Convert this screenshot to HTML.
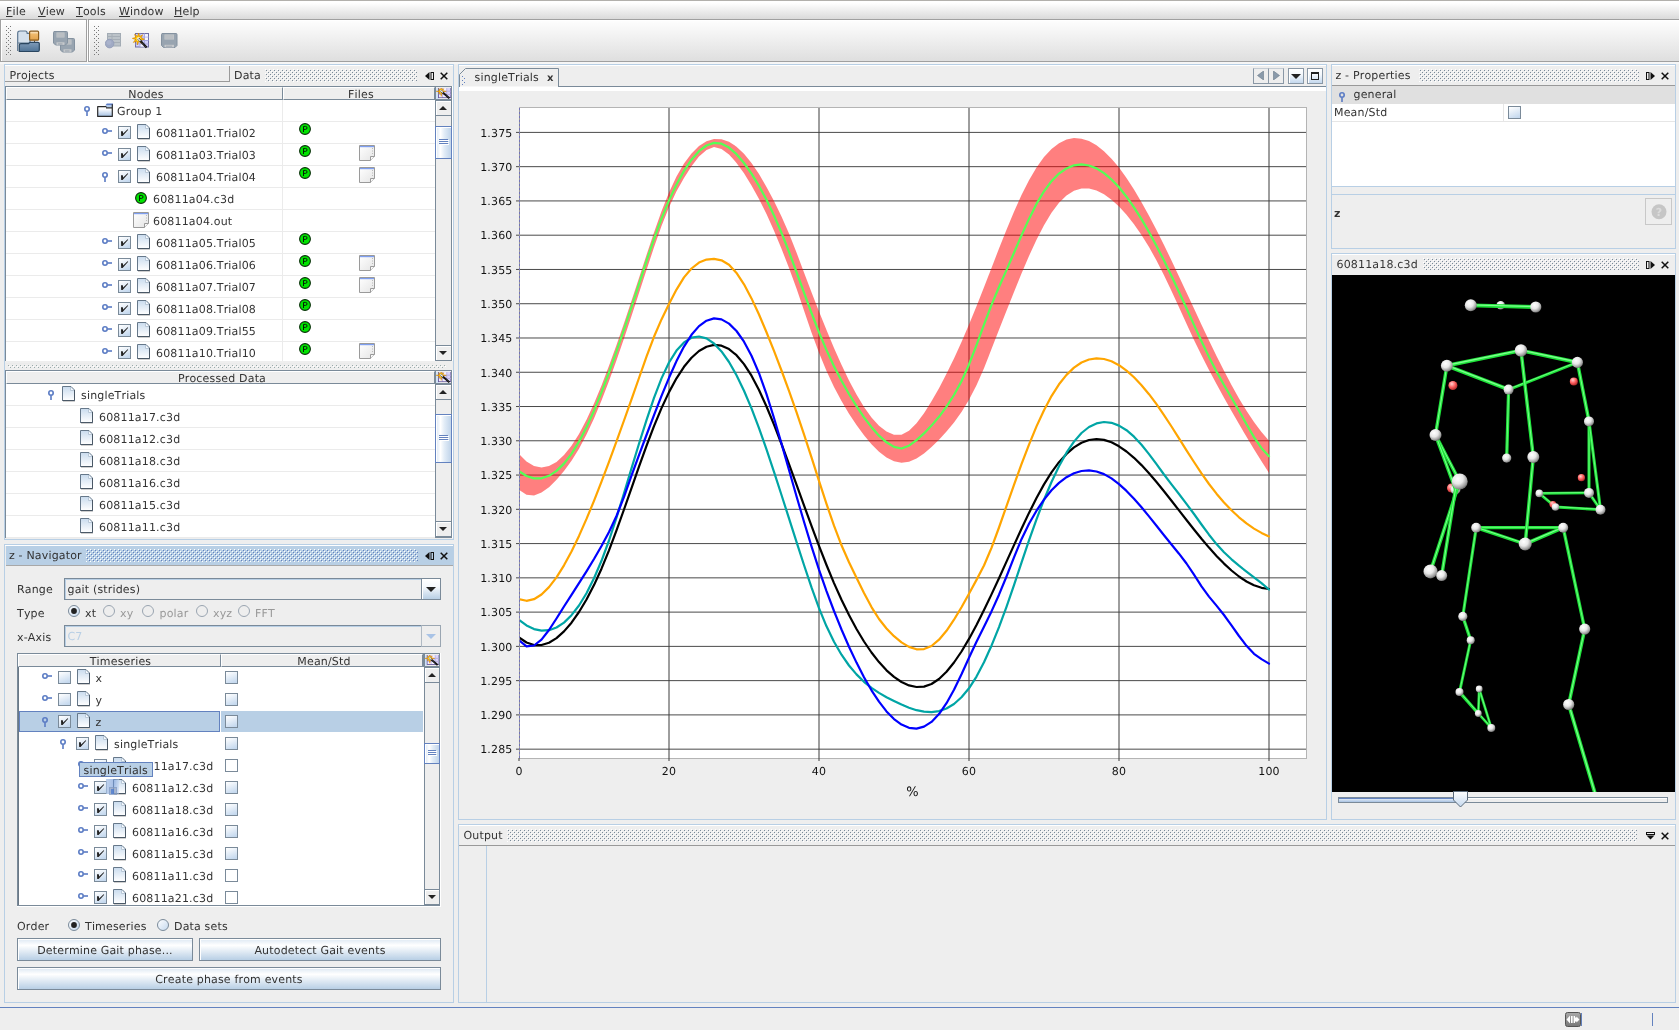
<!DOCTYPE html><html><head><meta charset="utf-8"><title>UI</title><style>
*{box-sizing:border-box}
html,body{margin:0;padding:0}
body{width:1679px;height:1030px;overflow:hidden;background:#eee;font:11px "DejaVu Sans","Liberation Sans",sans-serif;color:#333;position:relative;font-kerning:none;font-variant-ligatures:none;text-rendering:geometricPrecision;will-change:transform;letter-spacing:0.17px}
.a{position:absolute}
.t{position:absolute;white-space:nowrap;line-height:14px;height:14px}
.c{text-align:center}
.dis{color:#999}
.hdr{position:absolute;background:#eee;white-space:nowrap;border-bottom:1px solid #7a8a99;border-right:1px solid #7a8a99;border-top:1px solid #fff;border-left:1px solid #fff;text-align:center;line-height:13px}
.row{position:absolute;left:0;right:0;height:22px;border-bottom:1px solid #e9e9e9}
.btn{position:absolute;border:1px solid #7a8a99;background:linear-gradient(#dde8f3 0%,#fff 30%,#b8cfe5 100%);text-align:center;line-height:22px;padding-top:1px;box-shadow:inset 1px 1px 0 #fff}
</style></head><body>
<svg width="0" height="0" style="position:absolute"><defs>
<linearGradient id="gFile" x1="0" y1="0" x2="0" y2="1"><stop offset="0" stop-color="#c9dbee"/><stop offset="1" stop-color="#ffffff"/></linearGradient>
<linearGradient id="gCb" x1="0.2" y1="0" x2="0.6" y2="1"><stop offset="0" stop-color="#ffffff"/><stop offset="1" stop-color="#c4d8ee"/></linearGradient>
<linearGradient id="gFold" x1="0" y1="0" x2="0" y2="1"><stop offset="0" stop-color="#ffffff"/><stop offset=".25" stop-color="#ffffff"/><stop offset="1" stop-color="#a4c0e2"/></linearGradient>
<linearGradient id="gNote" x1="0" y1="0" x2="1" y2="1"><stop offset="0" stop-color="#ffffff"/><stop offset="1" stop-color="#e4e4e4"/></linearGradient>
<symbol id="hc" viewBox="0 0 10 6"><circle cx="3" cy="3" r="2.2" fill="none" stroke="#5b7cc4" stroke-width="1.6"/><rect x="5.6" y="2.2" width="4.4" height="1.6" fill="#5b7cc4"/></symbol>
<symbol id="he" viewBox="0 0 6 10"><circle cx="3" cy="3" r="2.2" fill="none" stroke="#5b7cc4" stroke-width="1.6"/><rect x="2.2" y="5.6" width="1.6" height="4.4" fill="#5b7cc4"/></symbol>
<symbol id="file" viewBox="0 0 13 16"><path d="M0.5 0.5H9L12.5 4V14.5H0.5Z" fill="url(#gFile)" stroke="#66788a" stroke-width="1"/><path d="M0.5 14.5H12.5V4" fill="none" stroke="#4a5866" stroke-width="1"/><path d="M8.5 1V4.5H12" fill="#f4f8fc" stroke="#b9c8d8" stroke-width="1"/><rect x="1" y="15" width="12" height="1" fill="#d0d0d0"/></symbol>
<symbol id="cb0" viewBox="0 0 13 13"><rect x="0.5" y="0.5" width="12" height="12" fill="url(#gCb)" stroke="#7a8a99"/></symbol>
<symbol id="cb1" viewBox="0 0 13 13"><rect x="0.5" y="0.5" width="12" height="12" fill="url(#gCb)" stroke="#7a8a99"/><path d="M3 5.2L4.8 5.2L5.2 7.6L9.6 3.2L10.2 3.8L4.6 10L3.2 10Z" fill="#222"/></symbol>
<symbol id="cbw" viewBox="0 0 13 13"><rect x="0.5" y="0.5" width="12" height="12" fill="#fff" stroke="#7a8a99"/></symbol>
<symbol id="pc" viewBox="0 0 12 12"><circle cx="6" cy="6" r="5.4" fill="#00e400" stroke="#0a300a" stroke-width="1.1"/><path d="M4.5 9V3.4H6.5A1.5 1.5 0 0 1 6.5 6.4H4.5" fill="none" stroke="#062006" stroke-width="1"/></symbol>
<symbol id="note" viewBox="0 0 16 16"><path d="M0.5 0.5H15.5V11.5L11.5 15.5H0.5Z" fill="url(#gNote)" stroke="#9a9a9a"/><rect x="1" y="1" width="14" height="1.2" fill="#7f9ff0"/><path d="M11.5 15.5V11.5H15.5" fill="#f8f8f8" stroke="#9a9a9a"/><path d="M13.5 3V10" stroke="#bbb" stroke-dasharray="1 1.5" fill="none"/></symbol>
<symbol id="folder" viewBox="0 0 16 14"><path d="M0.5 3.5H9.5V4.6H15.5V13.3H0.5Z" fill="url(#gFold)"/><polygon points="9.8,0.6 16,0.6 16,2.5 8.4,2.5" fill="#5b7cc4"/><rect x="9" y="2.5" width="6.5" height="1.8" fill="#b4cdee"/><path d="M0.6 3.7H9.4M9 4.8H15.4M0.7 3.2V13.4M15.3 1.2V13.4M0.2 13.3H15.8" stroke="#2a2a2a" stroke-width="1.2" fill="none"/></symbol>
<symbol id="wand" viewBox="0 0 16 12"><rect x="0" y="0" width="3" height="12" fill="#cfe2f8"/><rect x="2.5" y="-1" width="13.5" height="11.5" fill="#dad4fa" stroke="#6a5a9a" stroke-width="1"/><path d="M7 0V10M11.5 0V10M3 3.5H16M3 7H16" stroke="#b4acdc" stroke-width="1"/><rect x="7.6" y="0" width="3.4" height="3" fill="#f2efff"/><rect x="7.6" y="7.6" width="3.4" height="2.4" fill="#f2efff"/><rect x="3.2" y="7.6" width="3.2" height="2.4" fill="#f2efff"/><polygon points="5.50,-2.00 6.23,1.84 8.35,0.75 7.26,2.87 11.10,3.60 7.26,4.33 8.35,6.45 6.23,5.36 5.50,9.20 4.77,5.36 2.65,6.45 3.74,4.33 -0.10,3.60 3.74,2.87 2.65,0.75 4.77,1.84" fill="#f0a000" stroke="#d88800" stroke-width=".5"/><polygon points="5.50,0.60 5.96,2.49 7.03,2.07 6.61,3.14 8.50,3.60 6.61,4.06 7.03,5.13 5.96,4.71 5.50,6.60 5.04,4.71 3.97,5.13 4.39,4.06 2.50,3.60 4.39,3.14 3.97,2.07 5.04,2.49" fill="#ffe400"/><circle cx="5.5" cy="3.6" r="1.3" fill="#fff"/><path d="M5 3L14.4 11.2" stroke="#0a0a0a" stroke-width="2.1"/><path d="M5 2.9L7.4 5" stroke="#f4f4f4" stroke-width="1.5"/><path d="M8 5.6L14 10.8" stroke="#777" stroke-width=".7" stroke-dasharray=".8 1"/></symbol>
<symbol id="arrU" viewBox="0 0 8 4"><path d="M0 4L4 0L8 4Z" fill="#222"/></symbol>
<symbol id="arrD" viewBox="0 0 8 4"><path d="M0 0L4 4L8 0Z" fill="#222"/></symbol>
<symbol id="xx" viewBox="0 0 8 8"><path d="M0.7 0.7L7.3 7.3M7.3 0.7L0.7 7.3" stroke="#111" stroke-width="1.5"/></symbol>
<symbol id="pinL" viewBox="0 0 9 8"><path d="M0 4L4.5 0V8Z" fill="#111"/><rect x="6" y="0.5" width="2.5" height="7" fill="none" stroke="#111" stroke-width="1"/></symbol>
<symbol id="pinR" viewBox="0 0 9 8"><path d="M9 4L4.5 0V8Z" fill="#111"/><rect x="0.5" y="0.5" width="2.5" height="7" fill="none" stroke="#111" stroke-width="1"/></symbol>
</defs></svg>
<svg width="0" height="0" style="position:absolute"><defs>
<pattern id="bumpI" width="4" height="4" patternUnits="userSpaceOnUse"><rect x="0" y="0" width="1" height="1" fill="#fff"/><rect x="1" y="1" width="1" height="1" fill="#7a8a99"/><rect x="2" y="2" width="1" height="1" fill="#fff"/><rect x="3" y="3" width="1" height="1" fill="#7a8a99"/></pattern>
<pattern id="bumpA" width="4" height="4" patternUnits="userSpaceOnUse"><rect x="0" y="0" width="1" height="1" fill="#fff"/><rect x="1" y="1" width="1" height="1" fill="#6382bf"/><rect x="2" y="2" width="1" height="1" fill="#fff"/><rect x="3" y="3" width="1" height="1" fill="#6382bf"/></pattern>
<pattern id="tbgrip" width="4" height="4" patternUnits="userSpaceOnUse"><rect x="0" y="0" width="1" height="1" fill="#777"/><rect x="2" y="2" width="1" height="1" fill="#777"/></pattern>
<pattern id="split" width="4" height="4" patternUnits="userSpaceOnUse"><rect x="0" y="0" width="1" height="1" fill="#9aa"/><rect x="2" y="2" width="1" height="1" fill="#9aa"/><rect x="1" y="1" width="1" height="1" fill="#fff"/><rect x="3" y="3" width="1" height="1" fill="#fff"/></pattern>
</defs></svg>
<div class="a" style="left:0px;top:0px;width:1679px;height:20px;background:linear-gradient(#fff 0,#fff 10%,#dadada 100%);border-top:1px solid #b2b0ac;border-bottom:1px solid #c8c8c8"></div>
<div class="t " style="left:6px;top:5px;"><u>F</u>ile</div>
<div class="t " style="left:38px;top:5px;"><u>V</u>iew</div>
<div class="t " style="left:76px;top:5px;"><u>T</u>ools</div>
<div class="t " style="left:119px;top:5px;"><u>W</u>indow</div>
<div class="t " style="left:174px;top:5px;"><u>H</u>elp</div>
<div class="a" style="left:0px;top:20px;width:1679px;height:42px;background:linear-gradient(#fefefe,#dedede)"></div>
<div class="a" style="left:0px;top:19px;width:87px;height:43px;border:1px solid #a0a0a0;box-shadow:inset 1px 1px 0 #fff;"></div>
<div class="a" style="left:88px;top:19px;width:1600px;height:43px;border:1px solid #a0a0a0;box-shadow:inset 1px 1px 0 #fff;"></div>
<div class="a" style="left:87px;top:20px;width:1px;height:42px;background:#fff"></div>
<div class="a" style="left:0px;top:62px;width:1679px;height:2px;background:#f6f6f6"></div>
<svg class="a" style="left:6px;top:26px" width="6" height="30"><rect width="6" height="30" fill="url(#tbgrip)"/></svg>
<svg class="a" style="left:94px;top:26px" width="6" height="30"><rect width="6" height="30" fill="url(#tbgrip)"/></svg>
<svg class="a" style="left:17px;top:30px" width="23" height="23" viewBox="0 0 23 23">
<defs><linearGradient id="fo1" x1="0" y1="0" x2="0" y2="1"><stop offset="0" stop-color="#7f9bb8"/><stop offset="1" stop-color="#4f7396"/></linearGradient>
<linearGradient id="fo2" x1="0" y1="0" x2="0" y2="1"><stop offset="0" stop-color="#fff3dc"/><stop offset=".35" stop-color="#efb86a"/><stop offset="1" stop-color="#e2a24c"/></linearGradient></defs>
<path d="M0.7 21V3.2Q0.7 1 3 1H8.5Q10 1 10.2 3.3H13V13H0.7" fill="#d4e0ec" stroke="#5c7690" stroke-width="1.2"/>
<rect x="12.6" y="1.2" width="9" height="9" rx="1" fill="url(#fo2)" stroke="#8a5a1a" stroke-width="1.2"/>
<path d="M17.5 10.6V13" stroke="#6a5030" stroke-width="1"/>
<path d="M2.3 21.5V15Q2.3 13.6 4 13.6H11.5L13 12.4H21Q22.3 12.4 22.3 13.6V20Q22.3 21.5 21 21.5Z" fill="url(#fo1)" stroke="#2a4660" stroke-width="1.2"/>
</svg>
<svg class="a" style="left:53px;top:31px" width="23" height="22" viewBox="0 0 23 22"><g transform="translate(7,7)"><path d="M1 0.5H13.5Q14.5 0.5 14.5 1.5V12L12.5 14H2.5L0.5 12V1.5Q0.5 0.5 1.5 0.5Z" fill="#98a4b0" stroke="#8492a0" stroke-width="1"/><rect x="3.5" y="1.5" width="8" height="5" fill="#c6c9cc"/><path d="M4 3H11M4 5H11" stroke="#aeb4ba" stroke-width="1"/><rect x="3.5" y="11.3" width="8" height="2.6" fill="#c6c9cc"/><rect x="5" y="12.1" width="4.5" height="1.8" fill="#aab2ba"/></g><g transform="translate(0,0)"><path d="M1 0.5H13.5Q14.5 0.5 14.5 1.5V12L12.5 14H2.5L0.5 12V1.5Q0.5 0.5 1.5 0.5Z" fill="#98a4b0" stroke="#8492a0" stroke-width="1"/><rect x="3.5" y="1.5" width="8" height="5" fill="#c6c9cc"/><path d="M4 3H11M4 5H11" stroke="#aeb4ba" stroke-width="1"/><rect x="3.5" y="11.3" width="8" height="2.6" fill="#c6c9cc"/><rect x="5" y="12.1" width="4.5" height="1.8" fill="#aab2ba"/></g></svg>
<svg class="a" style="left:105px;top:32px" width="17" height="17" viewBox="0 0 17 17">
<rect x="2.5" y="1.5" width="13" height="12.5" fill="#bcc3c9" stroke="#a2abb4"/>
<path d="M2.5 4.5H15.5M2.5 7.5H15.5M2.5 10.5H15.5M7 1.5V14" stroke="#a6aeb6" stroke-width="1"/>
<circle cx="4.6" cy="11.6" r="4.3" fill="#a0aac4" stroke="#929cb8" stroke-width=".8"/><circle cx="4" cy="10.6" r="2.4" fill="#aab3cc"/></svg>
<svg class="a" style="left:132px;top:32px" width="18" height="17" viewBox="0 0 18 17">
<rect x="3.5" y="1.5" width="13" height="13.5" fill="#d2d2fa" stroke="#6e6ea4"/>
<path d="M3.5 5H16.5M3.5 8.5H16.5M3.5 12H16.5M8 1.5V15M12.5 1.5V15" stroke="#a8a8e0" stroke-width="1"/>
<rect x="13" y="2.2" width="3" height="2.4" fill="#f4f4ff"/><rect x="13" y="5.6" width="3" height="2.4" fill="#f4f4ff"/><rect x="8.6" y="12.6" width="3.4" height="2" fill="#f4f4ff"/>
<path d="M6.6 1L7.6 4.6L10.6 2.8L9 5.8L12.4 7.2L8.8 8.2L9.4 11.4L6.8 9.2L5.4 12.8L4.8 9L1.4 10.4L3.6 7.4L0.4 6.4L3.8 5.4L2.6 2.4L5.6 4.4Z" fill="#ffc400" stroke="#d88a00" stroke-width=".7"/>
<circle cx="6.6" cy="7" r="2" fill="#fff4b0"/>
<path d="M6.2 6.6L14.6 15.6" stroke="#111" stroke-width="2.2"/><path d="M6 6.4L8.4 9" stroke="#eee" stroke-width="1.4"/><path d="M9 9.6L14 15" stroke="#888" stroke-width=".6" stroke-dasharray="1 1"/></svg>
<svg class="a" style="left:161px;top:33px" width="17" height="16" viewBox="0 0 17 16"><g transform="translate(0,0)"><path d="M1 0.5H15Q16 0.5 16 1.5V12.5L14 14.5H2.5L0.5 12.5V1.5Q0.5 0.5 1.5 0.5Z" fill="#98a4b0" stroke="#8492a0" stroke-width="1"/><rect x="3.5" y="1.5" width="9.5" height="5" fill="#c6c9cc"/><path d="M4 3H12.5M4 5H12.5" stroke="#aeb4ba" stroke-width="1"/><rect x="3.5" y="11.8" width="9.5" height="2.6" fill="#c6c9cc"/><rect x="5" y="12.6" width="6" height="1.8" fill="#aab2ba"/></g></svg>
<div class="a" style="left:4px;top:64px;width:450px;height:476px;border:1px solid #b8cfe5;box-shadow:inset 0 1px 0 #fff"></div>
<div class="a" style="left:5px;top:66px;width:225px;height:16px;border-bottom:1px solid #9a9a9a;border-right:1px solid #9a9a9a"></div>
<div class="t " style="left:9.5px;top:69px;">Projects</div>
<div class="t " style="left:234px;top:69px;">Data</div>
<svg class="a" style="left:265px;top:69px" width="152" height="13"><rect width="152" height="13" fill="url(#bumpI)"/></svg>
<svg class="a" style="left:425px;top:72px" width="9" height="8" ><use href="#pinL" width="9" height="8"/></svg><svg class="a" style="left:440px;top:72px" width="8" height="8" ><use href="#xx" width="8" height="8"/></svg>
<div class="a" style="left:5px;top:86px;width:447px;height:275px;background:#fff;border:1px solid #7a8a99;border-bottom:none"></div><div class="a" style="left:452px;top:86px;width:1px;height:275px;background:#fff"></div>
<div class="hdr" style="left:6px;top:87px;width:277px;height:13px;padding-left:3px">Nodes</div>
<div class="hdr" style="left:283px;top:87px;width:152px;height:13px;padding-left:4px">Files</div>
<div class="a" style="left:435px;top:87px;width:16px;height:13px;background:#eee;border-left:1px solid #7a8a99;border-bottom:1px solid #7a8a99"></div>
<svg class="a" style="left:436px;top:88px" width="15" height="11" ><use href="#wand" width="15" height="11"/></svg>
<div class="a" style="left:6px;top:121px;width:429px;height:1px;background:#ebebeb"></div>
<svg class="a" style="left:84px;top:106px" width="6" height="10" ><use href="#he" width="6" height="10"/></svg>
<svg class="a" style="left:97px;top:102.5px" width="16" height="14" ><use href="#folder" width="16" height="14"/></svg>
<div class="t " style="left:117px;top:105px;">Group 1</div>
<div class="a" style="left:6px;top:143px;width:429px;height:1px;background:#ebebeb"></div>
<svg class="a" style="left:102px;top:128px" width="10" height="6" ><use href="#hc" width="10" height="6"/></svg>
<svg class="a" style="left:118px;top:126px" width="13" height="13" ><use href="#cb1" width="13" height="13"/></svg>
<svg class="a" style="left:137px;top:124px" width="13" height="16" ><use href="#file" width="13" height="16"/></svg>
<div class="t " style="left:156px;top:127px;">60811a01.Trial02</div>
<svg class="a" style="left:299px;top:123px" width="12" height="12" ><use href="#pc" width="12" height="12"/></svg>
<div class="a" style="left:6px;top:165px;width:429px;height:1px;background:#ebebeb"></div>
<svg class="a" style="left:102px;top:150px" width="10" height="6" ><use href="#hc" width="10" height="6"/></svg>
<svg class="a" style="left:118px;top:148px" width="13" height="13" ><use href="#cb1" width="13" height="13"/></svg>
<svg class="a" style="left:137px;top:146px" width="13" height="16" ><use href="#file" width="13" height="16"/></svg>
<div class="t " style="left:156px;top:149px;">60811a03.Trial03</div>
<svg class="a" style="left:299px;top:145px" width="12" height="12" ><use href="#pc" width="12" height="12"/></svg>
<svg class="a" style="left:359px;top:145px" width="16" height="16" ><use href="#note" width="16" height="16"/></svg>
<div class="a" style="left:6px;top:187px;width:429px;height:1px;background:#ebebeb"></div>
<svg class="a" style="left:102px;top:172px" width="6" height="10" ><use href="#he" width="6" height="10"/></svg>
<svg class="a" style="left:118px;top:170px" width="13" height="13" ><use href="#cb1" width="13" height="13"/></svg>
<svg class="a" style="left:137px;top:168px" width="13" height="16" ><use href="#file" width="13" height="16"/></svg>
<div class="t " style="left:156px;top:171px;">60811a04.Trial04</div>
<svg class="a" style="left:299px;top:167px" width="12" height="12" ><use href="#pc" width="12" height="12"/></svg>
<svg class="a" style="left:359px;top:167px" width="16" height="16" ><use href="#note" width="16" height="16"/></svg>
<div class="a" style="left:6px;top:209px;width:429px;height:1px;background:#ebebeb"></div>
<svg class="a" style="left:135px;top:192px" width="12" height="12" ><use href="#pc" width="12" height="12"/></svg>
<div class="t " style="left:153px;top:193px;">60811a04.c3d</div>
<div class="a" style="left:6px;top:231px;width:429px;height:1px;background:#ebebeb"></div>
<svg class="a" style="left:133px;top:212px" width="16" height="16" ><use href="#note" width="16" height="16"/></svg>
<div class="t " style="left:153px;top:215px;">60811a04.out</div>
<div class="a" style="left:6px;top:253px;width:429px;height:1px;background:#ebebeb"></div>
<svg class="a" style="left:102px;top:238px" width="10" height="6" ><use href="#hc" width="10" height="6"/></svg>
<svg class="a" style="left:118px;top:236px" width="13" height="13" ><use href="#cb1" width="13" height="13"/></svg>
<svg class="a" style="left:137px;top:234px" width="13" height="16" ><use href="#file" width="13" height="16"/></svg>
<div class="t " style="left:156px;top:237px;">60811a05.Trial05</div>
<svg class="a" style="left:299px;top:233px" width="12" height="12" ><use href="#pc" width="12" height="12"/></svg>
<div class="a" style="left:6px;top:275px;width:429px;height:1px;background:#ebebeb"></div>
<svg class="a" style="left:102px;top:260px" width="10" height="6" ><use href="#hc" width="10" height="6"/></svg>
<svg class="a" style="left:118px;top:258px" width="13" height="13" ><use href="#cb1" width="13" height="13"/></svg>
<svg class="a" style="left:137px;top:256px" width="13" height="16" ><use href="#file" width="13" height="16"/></svg>
<div class="t " style="left:156px;top:259px;">60811a06.Trial06</div>
<svg class="a" style="left:299px;top:255px" width="12" height="12" ><use href="#pc" width="12" height="12"/></svg>
<svg class="a" style="left:359px;top:255px" width="16" height="16" ><use href="#note" width="16" height="16"/></svg>
<div class="a" style="left:6px;top:297px;width:429px;height:1px;background:#ebebeb"></div>
<svg class="a" style="left:102px;top:282px" width="10" height="6" ><use href="#hc" width="10" height="6"/></svg>
<svg class="a" style="left:118px;top:280px" width="13" height="13" ><use href="#cb1" width="13" height="13"/></svg>
<svg class="a" style="left:137px;top:278px" width="13" height="16" ><use href="#file" width="13" height="16"/></svg>
<div class="t " style="left:156px;top:281px;">60811a07.Trial07</div>
<svg class="a" style="left:299px;top:277px" width="12" height="12" ><use href="#pc" width="12" height="12"/></svg>
<svg class="a" style="left:359px;top:277px" width="16" height="16" ><use href="#note" width="16" height="16"/></svg>
<div class="a" style="left:6px;top:319px;width:429px;height:1px;background:#ebebeb"></div>
<svg class="a" style="left:102px;top:304px" width="10" height="6" ><use href="#hc" width="10" height="6"/></svg>
<svg class="a" style="left:118px;top:302px" width="13" height="13" ><use href="#cb1" width="13" height="13"/></svg>
<svg class="a" style="left:137px;top:300px" width="13" height="16" ><use href="#file" width="13" height="16"/></svg>
<div class="t " style="left:156px;top:303px;">60811a08.Trial08</div>
<svg class="a" style="left:299px;top:299px" width="12" height="12" ><use href="#pc" width="12" height="12"/></svg>
<div class="a" style="left:6px;top:341px;width:429px;height:1px;background:#ebebeb"></div>
<svg class="a" style="left:102px;top:326px" width="10" height="6" ><use href="#hc" width="10" height="6"/></svg>
<svg class="a" style="left:118px;top:324px" width="13" height="13" ><use href="#cb1" width="13" height="13"/></svg>
<svg class="a" style="left:137px;top:322px" width="13" height="16" ><use href="#file" width="13" height="16"/></svg>
<div class="t " style="left:156px;top:325px;">60811a09.Trial55</div>
<svg class="a" style="left:299px;top:321px" width="12" height="12" ><use href="#pc" width="12" height="12"/></svg>
<div class="a" style="left:6px;top:363px;width:429px;height:1px;background:#ebebeb"></div>
<svg class="a" style="left:102px;top:348px" width="10" height="6" ><use href="#hc" width="10" height="6"/></svg>
<svg class="a" style="left:118px;top:346px" width="13" height="13" ><use href="#cb1" width="13" height="13"/></svg>
<svg class="a" style="left:137px;top:344px" width="13" height="16" ><use href="#file" width="13" height="16"/></svg>
<div class="t " style="left:156px;top:347px;">60811a10.Trial10</div>
<svg class="a" style="left:299px;top:343px" width="12" height="12" ><use href="#pc" width="12" height="12"/></svg>
<svg class="a" style="left:359px;top:343px" width="16" height="16" ><use href="#note" width="16" height="16"/></svg>
<div class="a" style="left:282px;top:100px;width:1px;height:261px;background:#ebebeb"></div>
<div class="a" style="left:435px;top:100px;width:17px;height:261px;background:#eee;border-left:1px solid #7a8a99;border-right:1px solid #7a8a99"></div><div class="a" style="left:435px;top:100px;width:17px;height:16px;background:#eee;border:1px solid #7a8a99;border-top-color:#7a8a99;box-shadow:inset 1px 1px 0 #fff"></div><svg class="a" style="left:439px;top:105.5px" width="8" height="4" ><use href="#arrU" width="8" height="4"/></svg><div class="a" style="left:435px;top:345px;width:17px;height:16px;background:#eee;border:1px solid #7a8a99;box-shadow:inset 1px 1px 0 #fff"></div><svg class="a" style="left:439px;top:351px" width="8" height="4" ><use href="#arrD" width="8" height="4"/></svg><div class="a" style="left:435px;top:126px;width:17px;height:33px;border:1px solid #6382bf;background:linear-gradient(90deg,#dbe7f4 0,#fff 30%,#e3edf7 55%,#c0d4ea 100%);box-shadow:inset 1px 1px 0 #fff"></div><div class="a" style="left:439px;top:139px;width:9px;height:1px;background:#6382bf"></div><div class="a" style="left:440px;top:140px;width:9px;height:1px;background:#fff"></div><div class="a" style="left:439px;top:141px;width:9px;height:1px;background:#6382bf"></div><div class="a" style="left:440px;top:142px;width:9px;height:1px;background:#fff"></div><div class="a" style="left:439px;top:143px;width:9px;height:1px;background:#6382bf"></div><div class="a" style="left:440px;top:144px;width:9px;height:1px;background:#fff"></div>
<svg class="a" style="left:8px;top:365px" width="438" height="3"><rect width="438" height="3" fill="url(#split)"/></svg>
<div class="a" style="left:5px;top:370px;width:447px;height:168px;background:#fff;border:1px solid #7a8a99"></div><div class="a" style="left:452px;top:370px;width:1px;height:168px;background:#fff"></div>
<div class="hdr" style="left:6px;top:371px;width:429px;height:13px;padding-left:3px">Processed Data</div>
<div class="a" style="left:435px;top:371px;width:16px;height:13px;background:#eee;border-left:1px solid #7a8a99;border-bottom:1px solid #7a8a99"></div>
<svg class="a" style="left:436px;top:372px" width="15" height="11" ><use href="#wand" width="15" height="11"/></svg>
<div class="a" style="left:6px;top:405px;width:429px;height:1px;background:#ebebeb"></div>
<svg class="a" style="left:48px;top:390px" width="6" height="10" ><use href="#he" width="6" height="10"/></svg>
<svg class="a" style="left:62px;top:386px" width="13" height="16" ><use href="#file" width="13" height="16"/></svg>
<div class="t " style="left:81px;top:389px;">singleTrials</div>
<div class="a" style="left:6px;top:427px;width:429px;height:1px;background:#ebebeb"></div>
<svg class="a" style="left:80px;top:408px" width="13" height="16" ><use href="#file" width="13" height="16"/></svg>
<div class="t " style="left:99px;top:411px;">60811a17.c3d</div>
<div class="a" style="left:6px;top:449px;width:429px;height:1px;background:#ebebeb"></div>
<svg class="a" style="left:80px;top:430px" width="13" height="16" ><use href="#file" width="13" height="16"/></svg>
<div class="t " style="left:99px;top:433px;">60811a12.c3d</div>
<div class="a" style="left:6px;top:471px;width:429px;height:1px;background:#ebebeb"></div>
<svg class="a" style="left:80px;top:452px" width="13" height="16" ><use href="#file" width="13" height="16"/></svg>
<div class="t " style="left:99px;top:455px;">60811a18.c3d</div>
<div class="a" style="left:6px;top:493px;width:429px;height:1px;background:#ebebeb"></div>
<svg class="a" style="left:80px;top:474px" width="13" height="16" ><use href="#file" width="13" height="16"/></svg>
<div class="t " style="left:99px;top:477px;">60811a16.c3d</div>
<div class="a" style="left:6px;top:515px;width:429px;height:1px;background:#ebebeb"></div>
<svg class="a" style="left:80px;top:496px" width="13" height="16" ><use href="#file" width="13" height="16"/></svg>
<div class="t " style="left:99px;top:499px;">60811a15.c3d</div>
<div class="a" style="left:6px;top:537px;width:429px;height:1px;background:#ebebeb"></div>
<svg class="a" style="left:80px;top:518px" width="13" height="16" ><use href="#file" width="13" height="16"/></svg>
<div class="t " style="left:99px;top:521px;">60811a11.c3d</div>
<div class="a" style="left:435px;top:384px;width:17px;height:153px;background:#eee;border-left:1px solid #7a8a99;border-right:1px solid #7a8a99"></div><div class="a" style="left:435px;top:384px;width:17px;height:16px;background:#eee;border:1px solid #7a8a99;border-top-color:#7a8a99;box-shadow:inset 1px 1px 0 #fff"></div><svg class="a" style="left:439px;top:389.5px" width="8" height="4" ><use href="#arrU" width="8" height="4"/></svg><div class="a" style="left:435px;top:521px;width:17px;height:16px;background:#eee;border:1px solid #7a8a99;box-shadow:inset 1px 1px 0 #fff"></div><svg class="a" style="left:439px;top:527px" width="8" height="4" ><use href="#arrD" width="8" height="4"/></svg><div class="a" style="left:435px;top:414px;width:17px;height:49px;border:1px solid #6382bf;background:linear-gradient(90deg,#dbe7f4 0,#fff 30%,#e3edf7 55%,#c0d4ea 100%);box-shadow:inset 1px 1px 0 #fff"></div><div class="a" style="left:439px;top:435px;width:9px;height:1px;background:#6382bf"></div><div class="a" style="left:440px;top:436px;width:9px;height:1px;background:#fff"></div><div class="a" style="left:439px;top:437px;width:9px;height:1px;background:#6382bf"></div><div class="a" style="left:440px;top:438px;width:9px;height:1px;background:#fff"></div><div class="a" style="left:439px;top:439px;width:9px;height:1px;background:#6382bf"></div><div class="a" style="left:440px;top:440px;width:9px;height:1px;background:#fff"></div>
<svg width="0" height="0" style="position:absolute"><defs><linearGradient id="gRad" x1="0" y1="0" x2="1" y2="1"><stop offset="0" stop-color="#fff"/><stop offset="1" stop-color="#c4d8ee"/></linearGradient></defs></svg>
<div class="a" style="left:4px;top:544px;width:450px;height:459px;border:1px solid #b8cfe5"></div>
<div class="a" style="left:5px;top:545px;width:448px;height:1px;background:#fff"></div>
<div class="a" style="left:6px;top:546px;width:447px;height:20px;background:#b8cfe5;border-bottom:1px solid #a8a8a8"></div>
<div class="t " style="left:9px;top:549px;">z - Navigator</div>
<svg class="a" style="left:86px;top:549px" width="332" height="13"><rect width="332" height="13" fill="url(#bumpA)"/></svg>
<svg class="a" style="left:425px;top:552px" width="9" height="8" ><use href="#pinL" width="9" height="8"/></svg><svg class="a" style="left:440px;top:552px" width="8" height="8" ><use href="#xx" width="8" height="8"/></svg>
<div class="t " style="left:17px;top:583px;">Range</div>
<div class="a" style="left:64px;top:578px;width:377px;height:22px;border:1px solid #7a8a99;background:#eee;box-shadow:inset 1px 1px 0 #b8cfe5"></div><div class="a" style="left:421px;top:578px;width:20px;height:22px;border:1px solid #7a8a99;background:linear-gradient(#fff 0,#f4f8fc 40%,#b8cfe5 100%);box-shadow:inset 1px 1px 0 #fff"></div><svg class="a" style="left:426px;top:587px" width="10" height="5"><path d="M0 0H10L5 5Z" fill="#222"/></svg><div class="t " style="left:67.5px;top:583px;">gait (strides)</div>
<div class="t " style="left:17px;top:607px;">Type</div>
<svg class="a" style="left:68px;top:605px" width="13" height="13"><circle cx="6" cy="6" r="5.5" fill="url(#gRad)" stroke="#7a8a99" stroke-width="1"/><circle cx="6" cy="6" r="2.9" fill="#222"/></svg>
<div class="t " style="left:85px;top:607px;">xt</div>
<svg class="a" style="left:103px;top:605px" width="13" height="13"><circle cx="6" cy="6" r="5.5" fill="#eee" stroke="#99a4b0" stroke-width="1"/></svg>
<div class="t dis" style="left:120px;top:607px;">xy</div>
<svg class="a" style="left:142px;top:605px" width="13" height="13"><circle cx="6" cy="6" r="5.5" fill="#eee" stroke="#99a4b0" stroke-width="1"/></svg>
<div class="t dis" style="left:159.5px;top:607px;">polar</div>
<svg class="a" style="left:196px;top:605px" width="13" height="13"><circle cx="6" cy="6" r="5.5" fill="#eee" stroke="#99a4b0" stroke-width="1"/></svg>
<div class="t dis" style="left:213px;top:607px;">xyz</div>
<svg class="a" style="left:238px;top:605px" width="13" height="13"><circle cx="6" cy="6" r="5.5" fill="#eee" stroke="#99a4b0" stroke-width="1"/></svg>
<div class="t dis" style="left:255px;top:607px;">FFT</div>
<div class="t " style="left:17px;top:631px;">x-Axis</div>
<div class="a" style="left:64px;top:625px;width:377px;height:22px;border:1px solid #7a8a99;background:#eee;box-shadow:inset 1px 1px 0 #b8cfe5"></div><div class="a" style="left:421px;top:625px;width:20px;height:22px;border:1px solid #9aa6b2;border-left:1px solid #b0bac4;background:#eee"></div><svg class="a" style="left:426px;top:634px" width="10" height="5"><path d="M0 0H10L5 5Z" fill="#a9c3e6"/></svg><div class="t " style="left:67.5px;top:630px;color:#b8cfe5">C7</div>
<div class="a" style="left:17px;top:653px;width:423px;height:253px;background:#fff;border:1px solid #7a8a99"></div>
<div class="a" style="left:440px;top:653px;width:1px;height:254px;background:#fff"></div>
<div class="a" style="left:17px;top:906px;width:424px;height:1px;background:#fff"></div>
<div class="a" style="left:18px;top:667px;width:1px;height:238px;background:#6a7886"></div>
<div class="hdr" style="left:18px;top:654px;width:203px;height:13px;padding-left:2px">Timeseries</div>
<div class="hdr" style="left:221px;top:654px;width:202px;height:13px;padding-left:4px">Mean/Std</div>
<div class="a" style="left:423px;top:654px;width:16px;height:13px;background:#eee;border-left:2px solid #7a8a99;border-bottom:1px solid #7a8a99"></div>
<svg class="a" style="left:425px;top:655px" width="14" height="11" ><use href="#wand" width="14" height="11"/></svg>
<div class="a" style="left:19px;top:667px;width:404px;height:238px;overflow:hidden">
<svg class="a" style="left:23px;top:6px" width="10" height="6" ><use href="#hc" width="10" height="6"/></svg>
<svg class="a" style="left:39px;top:4px" width="13" height="13" ><use href="#cb0" width="13" height="13"/></svg>
<svg class="a" style="left:58px;top:2px" width="13" height="16" ><use href="#file" width="13" height="16"/></svg>
<div class="t " style="left:76.5px;top:5px;">x</div>
<svg class="a" style="left:206px;top:4px" width="13" height="13" ><use href="#cb0" width="13" height="13"/></svg>
<svg class="a" style="left:23px;top:28px" width="10" height="6" ><use href="#hc" width="10" height="6"/></svg>
<svg class="a" style="left:39px;top:26px" width="13" height="13" ><use href="#cb0" width="13" height="13"/></svg>
<svg class="a" style="left:58px;top:24px" width="13" height="16" ><use href="#file" width="13" height="16"/></svg>
<div class="t " style="left:76.5px;top:27px;">y</div>
<svg class="a" style="left:206px;top:26px" width="13" height="13" ><use href="#cb0" width="13" height="13"/></svg>
<div class="a" style="left:0px;top:44px;width:201px;height:21px;background:#b8cfe5;border:1px solid #6382bf"></div>
<div class="a" style="left:202px;top:44px;width:203px;height:21px;background:#b8cfe5"></div>
<svg class="a" style="left:23px;top:50px" width="6" height="10" ><use href="#he" width="6" height="10"/></svg>
<svg class="a" style="left:39px;top:48px" width="13" height="13" ><use href="#cb1" width="13" height="13"/></svg>
<svg class="a" style="left:58px;top:46px" width="13" height="16" ><use href="#file" width="13" height="16"/></svg>
<div class="t " style="left:76.5px;top:49px;">z</div>
<svg class="a" style="left:206px;top:48px" width="13" height="13" ><use href="#cb0" width="13" height="13"/></svg>
<svg class="a" style="left:41px;top:72px" width="6" height="10" ><use href="#he" width="6" height="10"/></svg>
<svg class="a" style="left:57px;top:70px" width="13" height="13" ><use href="#cb1" width="13" height="13"/></svg>
<svg class="a" style="left:76px;top:68px" width="13" height="16" ><use href="#file" width="13" height="16"/></svg>
<div class="t " style="left:95px;top:71px;">singleTrials</div>
<svg class="a" style="left:206px;top:70px" width="13" height="13" ><use href="#cb0" width="13" height="13"/></svg>
<svg class="a" style="left:59px;top:94px" width="10" height="6" ><use href="#hc" width="10" height="6"/></svg>
<svg class="a" style="left:75px;top:92px" width="13" height="13" ><use href="#cb0" width="13" height="13"/></svg>
<svg class="a" style="left:94px;top:90px" width="13" height="16" ><use href="#file" width="13" height="16"/></svg>
<div class="t " style="left:113px;top:93px;">60811a17.c3d</div>
<svg class="a" style="left:206px;top:92px" width="13" height="13" ><use href="#cbw" width="13" height="13"/></svg>
<svg class="a" style="left:59px;top:116px" width="10" height="6" ><use href="#hc" width="10" height="6"/></svg>
<svg class="a" style="left:75px;top:114px" width="13" height="13" ><use href="#cb1" width="13" height="13"/></svg>
<svg class="a" style="left:94px;top:112px" width="13" height="16" ><use href="#file" width="13" height="16"/></svg>
<div class="t " style="left:113px;top:115px;">60811a12.c3d</div>
<svg class="a" style="left:206px;top:114px" width="13" height="13" ><use href="#cb0" width="13" height="13"/></svg>
<svg class="a" style="left:59px;top:138px" width="10" height="6" ><use href="#hc" width="10" height="6"/></svg>
<svg class="a" style="left:75px;top:136px" width="13" height="13" ><use href="#cb1" width="13" height="13"/></svg>
<svg class="a" style="left:94px;top:134px" width="13" height="16" ><use href="#file" width="13" height="16"/></svg>
<div class="t " style="left:113px;top:137px;">60811a18.c3d</div>
<svg class="a" style="left:206px;top:136px" width="13" height="13" ><use href="#cb0" width="13" height="13"/></svg>
<svg class="a" style="left:59px;top:160px" width="10" height="6" ><use href="#hc" width="10" height="6"/></svg>
<svg class="a" style="left:75px;top:158px" width="13" height="13" ><use href="#cb1" width="13" height="13"/></svg>
<svg class="a" style="left:94px;top:156px" width="13" height="16" ><use href="#file" width="13" height="16"/></svg>
<div class="t " style="left:113px;top:159px;">60811a16.c3d</div>
<svg class="a" style="left:206px;top:158px" width="13" height="13" ><use href="#cb0" width="13" height="13"/></svg>
<svg class="a" style="left:59px;top:182px" width="10" height="6" ><use href="#hc" width="10" height="6"/></svg>
<svg class="a" style="left:75px;top:180px" width="13" height="13" ><use href="#cb1" width="13" height="13"/></svg>
<svg class="a" style="left:94px;top:178px" width="13" height="16" ><use href="#file" width="13" height="16"/></svg>
<div class="t " style="left:113px;top:181px;">60811a15.c3d</div>
<svg class="a" style="left:206px;top:180px" width="13" height="13" ><use href="#cb0" width="13" height="13"/></svg>
<svg class="a" style="left:59px;top:204px" width="10" height="6" ><use href="#hc" width="10" height="6"/></svg>
<svg class="a" style="left:75px;top:202px" width="13" height="13" ><use href="#cb1" width="13" height="13"/></svg>
<svg class="a" style="left:94px;top:200px" width="13" height="16" ><use href="#file" width="13" height="16"/></svg>
<div class="t " style="left:113px;top:203px;">60811a11.c3d</div>
<svg class="a" style="left:206px;top:202px" width="13" height="13" ><use href="#cbw" width="13" height="13"/></svg>
<svg class="a" style="left:59px;top:226px" width="10" height="6" ><use href="#hc" width="10" height="6"/></svg>
<svg class="a" style="left:75px;top:224px" width="13" height="13" ><use href="#cb1" width="13" height="13"/></svg>
<svg class="a" style="left:94px;top:222px" width="13" height="16" ><use href="#file" width="13" height="16"/></svg>
<div class="t " style="left:113px;top:225px;">60811a21.c3d</div>
<svg class="a" style="left:206px;top:224px" width="13" height="13" ><use href="#cbw" width="13" height="13"/></svg>
<div class="a" style="left:87px;top:112px;width:13px;height:15px;background:linear-gradient(90deg,rgba(170,195,230,.75),rgba(110,150,215,.6) 55%,rgba(190,210,240,.5));"></div>
<div class="a" style="left:90px;top:120px;width:8px;height:8px;background:rgba(150,160,180,.55);border:1px solid rgba(120,150,200,.5)"></div>
<div class="a" style="left:92px;top:122px;width:3px;height:5px;background:rgba(70,120,210,.7)"></div>
</div>
<div class="a" style="left:424px;top:667px;width:16px;height:238px;background:#eee;border-left:1px solid #7a8a99;border-right:1px solid #7a8a99"></div><div class="a" style="left:424px;top:667px;width:16px;height:16px;background:#eee;border:1px solid #7a8a99;border-top-color:#7a8a99;box-shadow:inset 1px 1px 0 #fff"></div><svg class="a" style="left:428px;top:672.5px" width="8" height="4" ><use href="#arrU" width="8" height="4"/></svg><div class="a" style="left:424px;top:889px;width:16px;height:16px;background:#eee;border:1px solid #7a8a99;box-shadow:inset 1px 1px 0 #fff"></div><svg class="a" style="left:428px;top:895px" width="8" height="4" ><use href="#arrD" width="8" height="4"/></svg><div class="a" style="left:424px;top:743px;width:16px;height:21px;border:1px solid #6382bf;background:linear-gradient(90deg,#dbe7f4 0,#fff 30%,#e3edf7 55%,#c0d4ea 100%);box-shadow:inset 1px 1px 0 #fff"></div><div class="a" style="left:428px;top:750px;width:8px;height:1px;background:#6382bf"></div><div class="a" style="left:429px;top:751px;width:8px;height:1px;background:#fff"></div><div class="a" style="left:428px;top:752px;width:8px;height:1px;background:#6382bf"></div><div class="a" style="left:429px;top:753px;width:8px;height:1px;background:#fff"></div><div class="a" style="left:428px;top:754px;width:8px;height:1px;background:#6382bf"></div><div class="a" style="left:429px;top:755px;width:8px;height:1px;background:#fff"></div>
<div class="a" style="left:131px;top:758px;width:22px;height:4px;background:#fff"></div>
<div class="a" style="left:79px;top:762px;width:74px;height:15px;background:#b8cfe5;border:1px solid #6382bf"></div>
<div class="t " style="left:83.5px;top:763.5px;">singleTrials</div>
<div class="t " style="left:17px;top:920px;">Order</div>
<svg class="a" style="left:68px;top:919px" width="13" height="13"><circle cx="6" cy="6" r="5.5" fill="url(#gRad)" stroke="#7a8a99" stroke-width="1"/><circle cx="6" cy="6" r="2.9" fill="#222"/></svg>
<div class="t " style="left:85px;top:920px;">Timeseries</div>
<svg class="a" style="left:157px;top:919px" width="13" height="13"><circle cx="6" cy="6" r="5.5" fill="url(#gRad)" stroke="#7a8a99" stroke-width="1"/></svg>
<div class="t " style="left:174px;top:920px;">Data sets</div>
<div class="btn" style="left:17px;top:938px;width:176px;height:23px">Determine Gait phase...</div>
<div class="btn" style="left:199px;top:938px;width:242px;height:23px">Autodetect Gait events</div>
<div class="btn" style="left:17px;top:967px;width:424px;height:23px">Create phase from events</div>
<div class="a" style="left:458px;top:64px;width:869px;height:756px;border:1px solid #b8cfe5;box-shadow:inset 0 1px 0 #fff"></div>
<div class="a" style="left:459px;top:86px;width:867px;height:1px;background:#7a8a99"></div>
<div class="a" style="left:459px;top:87px;width:867px;height:4px;background:#fff"></div>
<svg class="a" style="left:459px;top:68px" width="101" height="20"><path d="M0.5 19V6.5L6.5 0.5H99.5V19" fill="#eee" stroke="#7a8a99" stroke-width="1"/><rect x="1" y="18.5" width="98" height="1.5" fill="#fff"/><g fill="#6382bf"><rect x="3" y="8" width="1" height="1"/><rect x="5" y="10" width="1" height="1"/><rect x="3" y="12" width="1" height="1"/><rect x="5" y="14" width="1" height="1"/><rect x="3" y="16" width="1" height="1"/></g></svg>
<div class="t " style="left:474.5px;top:71px;">singleTrials</div>
<div class="t " style="left:547px;top:72px;font-size:10px"><b>x</b></div>
<div class="a" style="left:1253px;top:68px;width:16px;height:16px;border:1px solid #8a98a6;background:#eee;border-top-color:#c4ccd4"></div><svg class="a" style="left:1257px;top:71px" width="7" height="9"><path d="M6.5 0L0.5 4.5L6.5 9Z" fill="#8a9aaa" stroke="#6a7a8a" stroke-width=".6"/></svg>
<div class="a" style="left:1268px;top:68px;width:16px;height:16px;border:1px solid #8a98a6;background:#eee;border-top-color:#c4ccd4"></div><svg class="a" style="left:1273px;top:71px" width="7" height="9"><path d="M0.5 0L6.5 4.5L0.5 9Z" fill="#8a9aaa" stroke="#6a7a8a" stroke-width=".6"/></svg>
<div class="a" style="left:1288px;top:68px;width:16px;height:16px;border:1px solid #8a98a6;background:linear-gradient(#fff,#f4f8fc 40%,#c4d8ee);box-shadow:inset 1px 1px 0 #fff"></div><svg class="a" style="left:1291px;top:74px" width="10" height="5"><path d="M0 0H10L5 5Z" fill="#222"/></svg>
<div class="a" style="left:1307px;top:68px;width:16px;height:16px;border:1px solid #8a98a6;background:linear-gradient(#fff,#f4f8fc 40%,#c4d8ee);box-shadow:inset 1px 1px 0 #fff"></div><div class="a" style="left:1311px;top:72px;width:8px;height:8px;border:1px solid #222;border-top-width:2px"></div>
<svg class="a" style="left:459px;top:91px" width="867" height="728" viewBox="459 91 867 728" font-family="DejaVu Sans,Liberation Sans,sans-serif" font-size="11"><rect x="519.5" y="107.5" width="787" height="651" fill="#fff" stroke="#b4b4b4" stroke-width="1"/><line x1="516" x2="1306" y1="132.40" y2="132.40" stroke="#4a4a4a" stroke-width="1"/><text x="512.5" y="136.6" text-anchor="end" fill="#111">1.375</text><line x1="516" x2="1306" y1="166.67" y2="166.67" stroke="#4a4a4a" stroke-width="1"/><text x="512.5" y="170.9" text-anchor="end" fill="#111">1.370</text><line x1="516" x2="1306" y1="200.93" y2="200.93" stroke="#4a4a4a" stroke-width="1"/><text x="512.5" y="205.1" text-anchor="end" fill="#111">1.365</text><line x1="516" x2="1306" y1="235.19" y2="235.19" stroke="#4a4a4a" stroke-width="1"/><text x="512.5" y="239.4" text-anchor="end" fill="#111">1.360</text><line x1="516" x2="1306" y1="269.46" y2="269.46" stroke="#4a4a4a" stroke-width="1"/><text x="512.5" y="273.7" text-anchor="end" fill="#111">1.355</text><line x1="516" x2="1306" y1="303.73" y2="303.73" stroke="#4a4a4a" stroke-width="1"/><text x="512.5" y="307.9" text-anchor="end" fill="#111">1.350</text><line x1="516" x2="1306" y1="337.99" y2="337.99" stroke="#4a4a4a" stroke-width="1"/><text x="512.5" y="342.2" text-anchor="end" fill="#111">1.345</text><line x1="516" x2="1306" y1="372.25" y2="372.25" stroke="#4a4a4a" stroke-width="1"/><text x="512.5" y="376.5" text-anchor="end" fill="#111">1.340</text><line x1="516" x2="1306" y1="406.52" y2="406.52" stroke="#4a4a4a" stroke-width="1"/><text x="512.5" y="410.7" text-anchor="end" fill="#111">1.335</text><line x1="516" x2="1306" y1="440.78" y2="440.78" stroke="#4a4a4a" stroke-width="1"/><text x="512.5" y="445.0" text-anchor="end" fill="#111">1.330</text><line x1="516" x2="1306" y1="475.05" y2="475.05" stroke="#4a4a4a" stroke-width="1"/><text x="512.5" y="479.2" text-anchor="end" fill="#111">1.325</text><line x1="516" x2="1306" y1="509.32" y2="509.32" stroke="#4a4a4a" stroke-width="1"/><text x="512.5" y="513.5" text-anchor="end" fill="#111">1.320</text><line x1="516" x2="1306" y1="543.58" y2="543.58" stroke="#4a4a4a" stroke-width="1"/><text x="512.5" y="547.8" text-anchor="end" fill="#111">1.315</text><line x1="516" x2="1306" y1="577.85" y2="577.85" stroke="#4a4a4a" stroke-width="1"/><text x="512.5" y="582.0" text-anchor="end" fill="#111">1.310</text><line x1="516" x2="1306" y1="612.11" y2="612.11" stroke="#4a4a4a" stroke-width="1"/><text x="512.5" y="616.3" text-anchor="end" fill="#111">1.305</text><line x1="516" x2="1306" y1="646.38" y2="646.38" stroke="#4a4a4a" stroke-width="1"/><text x="512.5" y="650.6" text-anchor="end" fill="#111">1.300</text><line x1="516" x2="1306" y1="680.64" y2="680.64" stroke="#4a4a4a" stroke-width="1"/><text x="512.5" y="684.8" text-anchor="end" fill="#111">1.295</text><line x1="516" x2="1306" y1="714.90" y2="714.90" stroke="#4a4a4a" stroke-width="1"/><text x="512.5" y="719.1" text-anchor="end" fill="#111">1.290</text><line x1="516" x2="1306" y1="749.17" y2="749.17" stroke="#4a4a4a" stroke-width="1"/><text x="512.5" y="753.4" text-anchor="end" fill="#111">1.285</text><line x1="519.0" x2="519.0" y1="758" y2="761" stroke="#3c3c3c" stroke-width="1"/><text x="519.0" y="775" text-anchor="middle" fill="#111">0</text><line x1="669.0" x2="669.0" y1="108" y2="761" stroke="#3c3c3c" stroke-width="1"/><text x="669.0" y="775" text-anchor="middle" fill="#111">20</text><line x1="819.0" x2="819.0" y1="108" y2="761" stroke="#3c3c3c" stroke-width="1"/><text x="819.0" y="775" text-anchor="middle" fill="#111">40</text><line x1="969.0" x2="969.0" y1="108" y2="761" stroke="#3c3c3c" stroke-width="1"/><text x="969.0" y="775" text-anchor="middle" fill="#111">60</text><line x1="1119.0" x2="1119.0" y1="108" y2="761" stroke="#3c3c3c" stroke-width="1"/><text x="1119.0" y="775" text-anchor="middle" fill="#111">80</text><line x1="1269.0" x2="1269.0" y1="108" y2="761" stroke="#3c3c3c" stroke-width="1"/><text x="1269.0" y="775" text-anchor="middle" fill="#111">100</text><line x1="519.5" x2="519.5" y1="108" y2="758" stroke="#999" stroke-width="1"/><line x1="519.5" x2="519.5" y1="108" y2="758" stroke="#6a6ac0" stroke-width="1" stroke-dasharray="2 2" opacity=".8"/><text x="912.5" y="795.8" text-anchor="middle" fill="#111" font-size="13" letter-spacing="0">%</text><clipPath id="plotclip"><rect x="520" y="108" width="786" height="650"/></clipPath><g clip-path="url(#plotclip)" fill="none" stroke-linejoin="round" stroke-linecap="round"><polygon points="519.0,454.1 526.5,461.6 534.0,466.0 541.5,467.5 549.0,466.1 556.5,461.9 564.0,455.1 571.5,445.7 579.0,433.9 586.5,419.7 594.0,403.4 601.5,385.4 609.0,365.8 616.5,345.0 624.0,323.2 631.5,300.7 639.0,277.9 646.5,255.0 654.0,232.5 661.5,211.3 669.0,192.4 676.5,176.5 684.0,163.6 691.5,153.5 699.0,146.1 706.5,141.3 714.0,139.1 721.5,139.3 729.0,141.8 736.5,146.7 744.0,153.7 751.5,162.9 759.0,174.0 766.5,186.9 774.0,201.1 781.5,216.4 789.0,233.4 796.5,252.4 804.0,272.4 811.5,292.2 819.0,311.5 826.5,330.1 834.0,348.0 841.5,364.8 849.0,380.4 856.5,394.5 864.0,406.9 871.5,417.4 879.0,425.7 886.5,431.5 894.0,434.7 901.5,434.7 909.0,430.8 916.5,423.3 924.0,413.2 931.5,401.3 939.0,388.2 946.5,373.8 954.0,358.4 961.5,341.9 969.0,324.5 976.5,306.3 984.0,287.3 991.5,267.9 999.0,248.6 1006.5,229.7 1014.0,211.8 1021.5,195.1 1029.0,180.2 1036.5,167.4 1044.0,156.9 1051.5,148.9 1059.0,143.2 1066.5,139.6 1074.0,138.1 1081.5,138.7 1089.0,141.1 1096.5,145.3 1104.0,151.2 1111.5,158.7 1119.0,167.6 1126.5,178.0 1134.0,189.5 1141.5,202.2 1149.0,215.7 1156.5,230.1 1164.0,245.1 1171.5,260.6 1179.0,276.5 1186.5,292.5 1194.0,308.6 1201.5,324.7 1209.0,340.5 1216.5,355.9 1224.0,370.8 1231.5,385.0 1239.0,398.4 1246.5,410.8 1254.0,422.1 1261.5,432.1 1269.0,440.8 1269.0,473.0 1261.5,461.3 1254.0,449.2 1246.5,436.8 1239.0,424.1 1231.5,411.1 1224.0,397.8 1216.5,384.1 1209.0,370.0 1201.5,355.3 1194.0,339.9 1186.5,323.8 1179.0,307.3 1171.5,291.0 1164.0,275.2 1156.5,260.5 1149.0,247.1 1141.5,235.0 1134.0,224.2 1126.5,214.7 1119.0,206.5 1111.5,199.7 1104.0,194.2 1096.5,190.4 1089.0,188.4 1081.5,188.4 1074.0,190.7 1066.5,195.4 1059.0,202.7 1051.5,212.8 1044.0,225.2 1036.5,239.7 1029.0,255.9 1021.5,273.5 1014.0,292.0 1006.5,310.8 999.0,329.7 991.5,349.1 984.0,368.2 976.5,385.2 969.0,399.7 961.5,412.0 954.0,422.5 946.5,431.6 939.0,439.7 931.5,447.1 924.0,453.5 916.5,458.6 909.0,461.8 901.5,462.8 894.0,461.2 886.5,457.4 879.0,451.7 871.5,444.3 864.0,435.3 856.5,425.1 849.0,413.8 841.5,401.1 834.0,386.9 826.5,370.9 819.0,352.8 811.5,332.5 804.0,310.4 796.5,288.6 789.0,268.0 781.5,248.7 774.0,230.7 766.5,214.1 759.0,199.0 751.5,185.4 744.0,173.3 736.5,162.9 729.0,154.5 721.5,148.9 714.0,147.1 706.5,149.9 699.0,156.5 691.5,166.2 684.0,177.9 676.5,191.3 669.0,207.2 661.5,226.0 654.0,247.3 646.5,269.9 639.0,293.0 631.5,315.9 624.0,338.5 616.5,360.3 609.0,381.1 601.5,400.5 594.0,418.4 586.5,434.6 579.0,448.7 571.5,460.8 564.0,471.1 556.5,479.8 549.0,487.2 541.5,492.6 534.0,495.4 526.5,494.8 519.0,489.8" fill="rgba(255,0,0,0.5)" stroke="none"/><polyline points="519.0,637.5 526.5,642.5 534.0,645.0 541.5,645.0 549.0,642.7 556.5,638.1 564.0,631.4 571.5,622.7 579.0,612.0 586.5,599.5 594.0,585.1 601.5,568.7 609.0,550.3 616.5,530.4 624.0,509.5 631.5,488.1 639.0,466.7 646.5,445.9 654.0,426.2 661.5,408.1 669.0,392.1 676.5,378.3 684.0,366.8 691.5,357.7 699.0,351.0 706.5,346.7 714.0,344.9 721.5,345.7 729.0,349.1 736.5,355.2 744.0,364.1 751.5,375.7 759.0,390.0 766.5,406.5 774.0,424.7 781.5,444.0 789.0,464.2 796.5,484.7 804.0,505.4 811.5,525.9 819.0,545.9 826.5,565.0 834.0,583.1 841.5,599.7 849.0,615.1 856.5,629.0 864.0,641.5 871.5,652.5 879.0,662.1 886.5,670.3 894.0,676.9 901.5,682.0 909.0,685.4 916.5,687.0 924.0,686.6 931.5,684.0 939.0,679.0 946.5,671.8 954.0,662.5 961.5,651.5 969.0,638.9 976.5,625.0 984.0,610.1 991.5,594.4 999.0,578.2 1006.5,561.6 1014.0,545.1 1021.5,528.7 1029.0,512.9 1036.5,498.0 1044.0,484.4 1051.5,472.4 1059.0,462.2 1066.5,453.9 1074.0,447.4 1081.5,442.8 1089.0,440.0 1096.5,439.1 1104.0,439.9 1111.5,442.3 1119.0,446.3 1126.5,451.5 1134.0,457.8 1141.5,465.1 1149.0,473.2 1156.5,482.0 1164.0,491.2 1171.5,500.7 1179.0,510.4 1186.5,520.0 1194.0,529.5 1201.5,538.8 1209.0,547.6 1216.5,555.9 1224.0,563.6 1231.5,570.5 1239.0,576.5 1246.5,581.5 1254.0,585.3 1261.5,587.8 1269.0,589.0" stroke="#000" stroke-width="2.2"/><polyline points="519.0,619.8 526.5,625.4 534.0,629.1 541.5,630.7 549.0,630.2 556.5,627.5 564.0,622.6 571.5,615.2 579.0,605.5 586.5,593.2 594.0,578.3 601.5,560.8 609.0,540.5 616.5,517.6 624.0,493.2 631.5,468.4 639.0,443.8 646.5,420.1 654.0,397.9 661.5,378.4 669.0,362.5 676.5,350.6 684.0,342.4 691.5,337.7 699.0,336.5 706.5,338.4 714.0,343.5 721.5,351.4 729.0,362.0 736.5,375.2 744.0,390.7 751.5,408.4 759.0,428.1 766.5,449.4 774.0,471.9 781.5,495.0 789.0,518.4 796.5,541.9 804.0,565.0 811.5,587.4 819.0,608.2 826.5,626.3 834.0,641.7 841.5,654.7 849.0,665.5 856.5,674.4 864.0,681.8 871.5,687.9 879.0,692.9 886.5,697.2 894.0,701.0 901.5,704.6 909.0,707.7 916.5,710.2 924.0,711.7 931.5,712.1 939.0,711.1 946.5,708.5 954.0,704.0 961.5,697.3 969.0,688.3 976.5,676.6 984.0,662.3 991.5,645.7 999.0,627.1 1006.5,606.8 1014.0,585.2 1021.5,562.7 1029.0,540.4 1036.5,519.3 1044.0,499.7 1051.5,482.0 1059.0,466.3 1066.5,452.7 1074.0,441.6 1081.5,433.0 1089.0,427.0 1096.5,423.4 1104.0,422.0 1111.5,422.8 1119.0,425.6 1126.5,430.2 1134.0,436.7 1141.5,444.8 1149.0,454.1 1156.5,464.2 1164.0,474.5 1171.5,484.3 1179.0,494.0 1186.5,503.8 1194.0,514.0 1201.5,524.5 1209.0,534.7 1216.5,544.1 1224.0,552.2 1231.5,559.3 1239.0,565.7 1246.5,571.6 1254.0,577.3 1261.5,583.2 1269.0,589.5" stroke="#00a5a5" stroke-width="2.2"/><polyline points="519.0,640.3 526.5,646.3 534.0,645.5 541.5,639.6 549.0,630.0 556.5,618.5 564.0,606.5 571.5,594.8 579.0,583.1 586.5,571.3 594.0,559.0 601.5,546.0 609.0,532.0 616.5,516.0 624.0,496.8 631.5,475.7 639.0,455.1 646.5,435.0 654.0,415.2 661.5,395.9 669.0,377.8 676.5,361.1 684.0,346.6 691.5,334.8 699.0,326.1 706.5,320.7 714.0,318.4 721.5,319.4 729.0,323.6 736.5,331.0 744.0,341.7 751.5,355.7 759.0,373.2 766.5,394.2 774.0,418.0 781.5,443.6 789.0,470.0 796.5,496.2 804.0,521.8 811.5,546.4 819.0,569.6 826.5,591.1 834.0,611.0 841.5,629.5 849.0,646.7 856.5,662.6 864.0,677.2 871.5,690.3 879.0,701.7 886.5,711.4 894.0,719.1 901.5,724.6 909.0,727.8 916.5,728.6 924.0,726.6 931.5,721.9 939.0,714.1 946.5,703.2 954.0,689.8 961.5,674.3 969.0,657.8 976.5,641.8 984.0,626.8 991.5,611.4 999.0,594.7 1006.5,576.5 1014.0,557.3 1021.5,539.2 1029.0,523.7 1036.5,510.7 1044.0,499.6 1051.5,490.3 1059.0,482.9 1066.5,477.2 1074.0,473.2 1081.5,471.0 1089.0,470.4 1096.5,471.5 1104.0,474.1 1111.5,478.4 1119.0,484.1 1126.5,490.9 1134.0,498.8 1141.5,507.3 1149.0,516.4 1156.5,525.8 1164.0,535.2 1171.5,544.5 1179.0,553.7 1186.5,563.5 1194.0,574.7 1201.5,586.4 1209.0,596.6 1216.5,605.6 1224.0,615.0 1231.5,625.4 1239.0,636.0 1246.5,645.8 1254.0,653.8 1261.5,659.1 1269.0,663.6" stroke="#0000ff" stroke-width="2.2"/><polyline points="519.0,599.1 526.5,600.8 534.0,599.2 541.5,594.5 549.0,587.1 556.5,577.3 564.0,565.3 571.5,551.4 579.0,535.9 586.5,518.9 594.0,500.8 601.5,481.7 609.0,461.8 616.5,441.4 624.0,420.5 631.5,399.3 639.0,378.0 646.5,356.7 654.0,336.8 661.5,319.4 669.0,303.9 676.5,289.6 684.0,277.4 691.5,268.5 699.0,262.6 706.5,259.6 714.0,258.8 721.5,260.3 729.0,264.8 736.5,272.9 744.0,284.3 751.5,298.4 759.0,314.5 766.5,332.2 774.0,350.9 781.5,370.5 789.0,390.8 796.5,412.1 804.0,434.3 811.5,457.3 819.0,480.8 826.5,503.9 834.0,525.7 841.5,545.3 849.0,562.2 856.5,577.7 864.0,593.0 871.5,607.1 879.0,619.0 886.5,628.5 894.0,636.2 901.5,642.4 909.0,646.9 916.5,649.3 924.0,649.1 931.5,646.0 939.0,639.7 946.5,630.8 954.0,619.7 961.5,607.2 969.0,593.7 976.5,579.9 984.0,565.5 991.5,547.9 999.0,527.5 1006.5,506.1 1014.0,484.8 1021.5,464.2 1029.0,444.6 1036.5,426.4 1044.0,410.2 1051.5,396.1 1059.0,384.3 1066.5,374.9 1074.0,367.6 1081.5,362.5 1089.0,359.5 1096.5,358.3 1104.0,359.0 1111.5,361.3 1119.0,365.2 1126.5,370.6 1134.0,377.3 1141.5,385.2 1149.0,394.2 1156.5,404.2 1164.0,415.1 1171.5,426.5 1179.0,438.3 1186.5,450.3 1194.0,462.0 1201.5,473.3 1209.0,484.0 1216.5,493.7 1224.0,502.5 1231.5,510.3 1239.0,517.3 1246.5,523.4 1254.0,528.6 1261.5,532.9 1269.0,536.4" stroke="#ffa500" stroke-width="2.2"/><polyline points="519.0,471.2 526.5,476.0 534.0,478.4 541.5,478.3 549.0,475.8 556.5,470.9 564.0,463.6 571.5,453.8 579.0,441.7 586.5,427.2 594.0,410.7 601.5,392.3 609.0,372.5 616.5,351.5 624.0,329.5 631.5,307.0 639.0,284.1 646.5,261.2 654.0,239.0 661.5,218.6 669.0,200.4 676.5,184.5 684.0,170.9 691.5,159.7 699.0,151.2 706.5,145.5 714.0,142.9 721.5,143.7 729.0,147.6 736.5,154.2 744.0,163.0 751.5,173.6 759.0,185.9 766.5,199.8 774.0,215.4 781.5,232.8 789.0,251.8 796.5,272.0 804.0,292.6 811.5,313.0 819.0,332.4 826.5,350.1 834.0,366.2 841.5,380.7 849.0,394.0 856.5,406.1 864.0,417.3 871.5,427.2 879.0,435.7 886.5,442.3 894.0,446.9 901.5,448.5 909.0,445.7 916.5,440.1 924.0,433.4 931.5,425.6 939.0,416.8 946.5,406.6 954.0,395.0 961.5,381.2 969.0,364.5 976.5,345.1 984.0,324.7 991.5,304.9 999.0,287.0 1006.5,270.1 1014.0,252.7 1021.5,235.4 1029.0,218.9 1036.5,203.9 1044.0,191.3 1051.5,181.2 1059.0,173.6 1066.5,168.4 1074.0,165.3 1081.5,164.4 1089.0,165.5 1096.5,168.4 1104.0,173.1 1111.5,179.5 1119.0,187.3 1126.5,196.7 1134.0,207.3 1141.5,219.1 1149.0,232.0 1156.5,245.9 1164.0,260.6 1171.5,276.0 1179.0,292.0 1186.5,308.3 1194.0,324.9 1201.5,341.2 1209.0,356.9 1216.5,371.6 1224.0,385.0 1231.5,397.8 1239.0,410.8 1246.5,424.3 1254.0,437.1 1261.5,448.2 1269.0,456.3" stroke="#55ff55" stroke-width="2.2"/></g></svg>
<div class="a" style="left:1331px;top:64px;width:345px;height:185px;border:1px solid #b8cfe5;box-shadow:inset 0 1px 0 #fff"></div>
<div class="t " style="left:1335.5px;top:69px;">z - Properties</div>
<svg class="a" style="left:1419px;top:69px" width="220" height="13"><rect width="220" height="13" fill="url(#bumpI)"/></svg>
<svg class="a" style="left:1646px;top:72px" width="9" height="8" ><use href="#pinR" width="9" height="8"/></svg><svg class="a" style="left:1661px;top:72px" width="8" height="8" ><use href="#xx" width="8" height="8"/></svg>
<div class="a" style="left:1332px;top:85px;width:343px;height:1px;background:#999"></div>
<div class="a" style="left:1332px;top:86px;width:343px;height:100px;background:#fff"></div>
<div class="a" style="left:1332px;top:86px;width:343px;height:18px;background:#e0e0e0"></div>
<svg class="a" style="left:1339px;top:92px" width="6" height="10" ><use href="#he" width="6" height="10"/></svg>
<div class="t " style="left:1353.5px;top:88px;">general</div>
<div class="t " style="left:1334px;top:106px;">Mean/Std</div>
<div class="a" style="left:1503px;top:104px;width:1px;height:17px;background:#e6e6e6"></div>
<div class="a" style="left:1332px;top:121px;width:343px;height:1px;background:#e6e6e6"></div>
<svg class="a" style="left:1508px;top:106px" width="13" height="13" ><use href="#cb0" width="13" height="13"/></svg>
<div class="a" style="left:1332px;top:186px;width:343px;height:1px;background:#b8cfe5"></div>
<div class="a" style="left:1332px;top:194px;width:343px;height:1px;background:#b8cfe5"></div>
<div class="t " style="left:1334px;top:207px;"><b>z</b></div>
<div class="a" style="left:1645px;top:198px;width:27px;height:27px;border:1px solid #c8c8c8"></div>
<svg class="a" style="left:1651px;top:204px" width="16" height="16"><circle cx="8" cy="7.8" r="7.5" fill="#c6c6c6"/><text x="8" y="12" font-size="11" font-weight="bold" text-anchor="middle" fill="#dcdcdc" font-family="DejaVu Sans,Liberation Sans,sans-serif">?</text></svg>
<div class="a" style="left:1331px;top:253px;width:345px;height:567px;border:1px solid #b8cfe5;box-shadow:inset 0 1px 0 #fff"></div>
<div class="t " style="left:1336.5px;top:258px;">60811a18.c3d</div>
<svg class="a" style="left:1423px;top:258px" width="216" height="12"><rect width="216" height="12" fill="url(#bumpI)"/></svg>
<svg class="a" style="left:1646px;top:261px" width="9" height="8" ><use href="#pinR" width="9" height="8"/></svg><svg class="a" style="left:1661px;top:261px" width="8" height="8" ><use href="#xx" width="8" height="8"/></svg>
<div class="a" style="left:1332px;top:275px;width:343px;height:517px;background:#000"></div>
<svg class="a" style="left:1332px;top:274px" width="343" height="518" viewBox="1332 274 343 518"><defs><radialGradient id="sw" cx="0.38" cy="0.32" r="0.75"><stop offset="0" stop-color="#fff"/><stop offset="0.45" stop-color="#e8e8e8"/><stop offset="0.8" stop-color="#9a9a9a"/><stop offset="1" stop-color="#505050"/></radialGradient><radialGradient id="sr" cx="0.38" cy="0.32" r="0.75"><stop offset="0" stop-color="#ffd0d0"/><stop offset="0.5" stop-color="#ff6060"/><stop offset="1" stop-color="#a02020"/></radialGradient></defs><circle cx="1451.5" cy="488.0" r="4.5" fill="url(#sr)"/><circle cx="1455.5" cy="489.5" r="5.0" fill="url(#sw)"/><circle cx="1500.7" cy="305.3" r="4.2" fill="url(#sw)"/><line x1="1470.8" y1="305.3" x2="1535.8" y2="307.0" stroke="#1ee43a" stroke-width="3.8"/><line x1="1470.8" y1="304.9" x2="1535.8" y2="306.6" stroke="#7dff8e" stroke-width="1.4"/><line x1="1446.9" y1="365.7" x2="1521.0" y2="350.5" stroke="#1ee43a" stroke-width="3.8"/><line x1="1446.9" y1="365.3" x2="1521.0" y2="350.1" stroke="#7dff8e" stroke-width="1.4"/><line x1="1521.0" y1="350.5" x2="1577.4" y2="362.4" stroke="#1ee43a" stroke-width="3.8"/><line x1="1521.0" y1="350.1" x2="1577.4" y2="362.0" stroke="#7dff8e" stroke-width="1.4"/><line x1="1446.9" y1="365.7" x2="1508.6" y2="389.6" stroke="#1ee43a" stroke-width="3.8"/><line x1="1446.9" y1="365.3" x2="1508.6" y2="389.2" stroke="#7dff8e" stroke-width="1.4"/><line x1="1508.6" y1="389.6" x2="1577.4" y2="362.4" stroke="#1ee43a" stroke-width="2.8"/><line x1="1508.6" y1="389.2" x2="1577.4" y2="362.0" stroke="#7dff8e" stroke-width="0.8"/><line x1="1521.0" y1="350.5" x2="1533.3" y2="457.0" stroke="#1ee43a" stroke-width="3.4"/><line x1="1521.0" y1="350.1" x2="1533.3" y2="456.6" stroke="#7dff8e" stroke-width="1.0"/><line x1="1508.6" y1="389.6" x2="1506.7" y2="458.1" stroke="#1ee43a" stroke-width="3.2"/><line x1="1508.6" y1="389.2" x2="1506.7" y2="457.7" stroke="#7dff8e" stroke-width="0.8"/><line x1="1446.9" y1="365.7" x2="1435.5" y2="435.0" stroke="#1ee43a" stroke-width="3.4"/><line x1="1446.9" y1="365.3" x2="1435.5" y2="434.6" stroke="#7dff8e" stroke-width="1.0"/><line x1="1435.5" y1="435.0" x2="1459.7" y2="481.5" stroke="#1ee43a" stroke-width="3.4"/><line x1="1435.5" y1="434.6" x2="1459.7" y2="481.1" stroke="#7dff8e" stroke-width="1.0"/><line x1="1435.5" y1="435.0" x2="1455.5" y2="489.5" stroke="#1ee43a" stroke-width="3.4"/><line x1="1435.5" y1="434.6" x2="1455.5" y2="489.1" stroke="#7dff8e" stroke-width="1.0"/><line x1="1459.7" y1="481.5" x2="1430.5" y2="571.4" stroke="#1ee43a" stroke-width="3.4"/><line x1="1459.7" y1="481.1" x2="1430.5" y2="571.0" stroke="#7dff8e" stroke-width="1.0"/><line x1="1455.5" y1="489.5" x2="1441.7" y2="575.6" stroke="#1ee43a" stroke-width="3.4"/><line x1="1455.5" y1="489.1" x2="1441.7" y2="575.2" stroke="#7dff8e" stroke-width="1.0"/><line x1="1577.4" y1="362.4" x2="1589.0" y2="421.4" stroke="#1ee43a" stroke-width="3.4"/><line x1="1577.4" y1="362.0" x2="1589.0" y2="421.0" stroke="#7dff8e" stroke-width="1.0"/><line x1="1589.0" y1="421.4" x2="1589.0" y2="492.9" stroke="#1ee43a" stroke-width="3.0"/><line x1="1589.0" y1="421.0" x2="1589.0" y2="492.5" stroke="#7dff8e" stroke-width="0.8"/><line x1="1589.0" y1="421.4" x2="1600.5" y2="509.7" stroke="#1ee43a" stroke-width="3.0"/><line x1="1589.0" y1="421.0" x2="1600.5" y2="509.3" stroke="#7dff8e" stroke-width="0.8"/><line x1="1539.3" y1="493.4" x2="1589.0" y2="492.9" stroke="#1ee43a" stroke-width="2.8"/><line x1="1539.3" y1="493.0" x2="1589.0" y2="492.5" stroke="#7dff8e" stroke-width="0.8"/><line x1="1539.3" y1="493.4" x2="1555.5" y2="507.0" stroke="#1ee43a" stroke-width="2.8"/><line x1="1539.3" y1="493.0" x2="1555.5" y2="506.6" stroke="#7dff8e" stroke-width="0.8"/><line x1="1555.5" y1="507.0" x2="1600.5" y2="509.7" stroke="#1ee43a" stroke-width="2.8"/><line x1="1555.5" y1="506.6" x2="1600.5" y2="509.3" stroke="#7dff8e" stroke-width="0.8"/><line x1="1589.0" y1="492.9" x2="1600.5" y2="509.7" stroke="#1ee43a" stroke-width="2.8"/><line x1="1589.0" y1="492.5" x2="1600.5" y2="509.3" stroke="#7dff8e" stroke-width="0.8"/><line x1="1476.2" y1="527.7" x2="1563.2" y2="527.7" stroke="#1ee43a" stroke-width="3.2"/><line x1="1476.2" y1="527.3" x2="1563.2" y2="527.3" stroke="#7dff8e" stroke-width="0.8"/><line x1="1476.2" y1="527.7" x2="1525.2" y2="544.0" stroke="#1ee43a" stroke-width="3.4"/><line x1="1476.2" y1="527.3" x2="1525.2" y2="543.6" stroke="#7dff8e" stroke-width="1.0"/><line x1="1563.2" y1="527.7" x2="1525.2" y2="544.0" stroke="#1ee43a" stroke-width="3.6"/><line x1="1563.2" y1="527.3" x2="1525.2" y2="543.6" stroke="#7dff8e" stroke-width="1.2"/><line x1="1533.3" y1="457.0" x2="1525.2" y2="544.0" stroke="#1ee43a" stroke-width="3.4"/><line x1="1533.3" y1="456.6" x2="1525.2" y2="543.6" stroke="#7dff8e" stroke-width="1.0"/><line x1="1476.2" y1="527.7" x2="1462.8" y2="616.4" stroke="#1ee43a" stroke-width="3.0"/><line x1="1476.2" y1="527.3" x2="1462.8" y2="616.0" stroke="#7dff8e" stroke-width="0.8"/><line x1="1462.8" y1="616.4" x2="1470.7" y2="640.3" stroke="#1ee43a" stroke-width="3.2"/><line x1="1462.8" y1="616.0" x2="1470.7" y2="639.9" stroke="#7dff8e" stroke-width="0.8"/><line x1="1470.7" y1="640.3" x2="1459.5" y2="692.1" stroke="#1ee43a" stroke-width="2.8"/><line x1="1470.7" y1="639.9" x2="1459.5" y2="691.7" stroke="#7dff8e" stroke-width="0.8"/><line x1="1459.5" y1="692.1" x2="1478.3" y2="713.5" stroke="#1ee43a" stroke-width="3.2"/><line x1="1459.5" y1="691.7" x2="1478.3" y2="713.1" stroke="#7dff8e" stroke-width="0.8"/><line x1="1479.2" y1="689.0" x2="1478.3" y2="713.5" stroke="#1ee43a" stroke-width="2.6"/><line x1="1479.2" y1="688.6" x2="1478.3" y2="713.1" stroke="#7dff8e" stroke-width="0.8"/><line x1="1479.2" y1="689.0" x2="1491.3" y2="727.9" stroke="#1ee43a" stroke-width="2.6"/><line x1="1479.2" y1="688.6" x2="1491.3" y2="727.5" stroke="#7dff8e" stroke-width="0.8"/><line x1="1478.3" y1="713.5" x2="1491.3" y2="727.9" stroke="#1ee43a" stroke-width="2.6"/><line x1="1478.3" y1="713.1" x2="1491.3" y2="727.5" stroke="#7dff8e" stroke-width="0.8"/><line x1="1563.2" y1="527.7" x2="1584.7" y2="629.1" stroke="#1ee43a" stroke-width="3.2"/><line x1="1563.2" y1="527.3" x2="1584.7" y2="628.7" stroke="#7dff8e" stroke-width="0.8"/><line x1="1584.7" y1="629.1" x2="1568.7" y2="704.5" stroke="#1ee43a" stroke-width="3.4"/><line x1="1584.7" y1="628.7" x2="1568.7" y2="704.1" stroke="#7dff8e" stroke-width="1.0"/><line x1="1568.7" y1="704.5" x2="1595.5" y2="795.0" stroke="#1ee43a" stroke-width="3.6"/><line x1="1568.7" y1="704.1" x2="1595.5" y2="794.6" stroke="#7dff8e" stroke-width="1.2"/><circle cx="1452.9" cy="385.5" r="4.5" fill="url(#sr)"/><circle cx="1573.8" cy="381.4" r="4.0" fill="url(#sr)"/><circle cx="1581.4" cy="477.7" r="3.6" fill="url(#sr)"/><circle cx="1552.9" cy="504.3" r="3.4" fill="url(#sr)"/><circle cx="1470.8" cy="305.3" r="6.0" fill="url(#sw)"/><circle cx="1535.8" cy="307.0" r="5.6" fill="url(#sw)"/><circle cx="1521.0" cy="350.5" r="6.2" fill="url(#sw)"/><circle cx="1446.9" cy="365.7" r="6.0" fill="url(#sw)"/><circle cx="1577.4" cy="362.4" r="5.6" fill="url(#sw)"/><circle cx="1508.6" cy="389.6" r="5.0" fill="url(#sw)"/><circle cx="1533.3" cy="457.0" r="6.0" fill="url(#sw)"/><circle cx="1506.7" cy="458.1" r="4.6" fill="url(#sw)"/><circle cx="1435.5" cy="435.0" r="6.0" fill="url(#sw)"/><circle cx="1459.7" cy="481.5" r="8.0" fill="url(#sw)"/><circle cx="1589.0" cy="421.4" r="5.0" fill="url(#sw)"/><circle cx="1589.0" cy="492.9" r="5.0" fill="url(#sw)"/><circle cx="1600.5" cy="509.7" r="5.0" fill="url(#sw)"/><circle cx="1539.3" cy="493.4" r="3.8" fill="url(#sw)"/><circle cx="1555.5" cy="507.0" r="3.8" fill="url(#sw)"/><circle cx="1476.2" cy="527.7" r="5.0" fill="url(#sw)"/><circle cx="1563.2" cy="527.7" r="5.0" fill="url(#sw)"/><circle cx="1525.2" cy="544.0" r="6.5" fill="url(#sw)"/><circle cx="1430.5" cy="571.4" r="7.0" fill="url(#sw)"/><circle cx="1441.7" cy="575.6" r="5.5" fill="url(#sw)"/><circle cx="1462.8" cy="616.4" r="4.6" fill="url(#sw)"/><circle cx="1470.7" cy="640.3" r="4.0" fill="url(#sw)"/><circle cx="1459.5" cy="692.1" r="4.0" fill="url(#sw)"/><circle cx="1479.2" cy="689.0" r="3.4" fill="url(#sw)"/><circle cx="1478.3" cy="713.5" r="3.4" fill="url(#sw)"/><circle cx="1491.3" cy="727.9" r="4.0" fill="url(#sw)"/><circle cx="1584.7" cy="629.1" r="5.6" fill="url(#sw)"/><circle cx="1568.7" cy="704.5" r="5.6" fill="url(#sw)"/></svg>
<div class="a" style="left:1338px;top:797px;width:330px;height:6px;border:1px solid #7a8a99;background:#eee;box-shadow:inset 0 1px 0 #fff"></div>
<div class="a" style="left:1339px;top:798px;width:118px;height:4px;background:linear-gradient(#dfe9f5,#a8c2e2);border-top:1px solid #6382bf"></div>
<svg class="a" style="left:1453px;top:791px" width="15" height="17"><defs><linearGradient id="gTh" x1="0" y1="0" x2="0" y2="1"><stop offset="0" stop-color="#fff"/><stop offset="1" stop-color="#c4d8ee"/></linearGradient></defs><path d="M0.5 0.5H14.5V9L7.5 16L0.5 9Z" fill="url(#gTh)" stroke="#5a6a7a" stroke-width="1"/></svg>
<div class="a" style="left:458px;top:824px;width:1218px;height:179px;border:1px solid #b8cfe5;box-shadow:inset 0 1px 0 #fff"></div>
<div class="t " style="left:463.5px;top:829px;">Output</div>
<svg class="a" style="left:507px;top:829px" width="1130" height="13"><rect width="1130" height="13" fill="url(#bumpI)"/></svg>
<svg class="a" style="left:1646px;top:832px" width="9" height="8"><rect x="0.5" y="0.5" width="8" height="2" fill="none" stroke="#111"/><path d="M0.5 3.5H8.5L4.5 7.5Z" fill="#111"/></svg>
<svg class="a" style="left:1661px;top:832px" width="8" height="8" ><use href="#xx" width="8" height="8"/></svg>
<div class="a" style="left:459px;top:845px;width:1216px;height:1px;background:#999"></div>
<div class="a" style="left:486px;top:846px;width:1px;height:156px;background:#b8cfe5"></div>
<div class="a" style="left:0px;top:1007px;width:1679px;height:1px;background:#6382bf"></div>
<svg class="a" style="left:1565px;top:1012px" width="16" height="15"><defs><linearGradient id="gSt" x1="0" y1="0" x2="0" y2="1"><stop offset="0" stop-color="#aaa"/><stop offset="1" stop-color="#777"/></linearGradient></defs><rect x="0.5" y="0.5" width="15" height="14" rx="2" fill="url(#gSt)" stroke="#555"/><path d="M1.5 7.5L5 3.5V11.5Z" fill="#fff"/><rect x="6" y="4" width="1.6" height="7" fill="#fff"/><path d="M8.6 4H10V5.5H11.5V4.5L14.5 7.5L11.5 10.5V9.5H10V11H8.6Z" fill="#fff"/></svg>
<div class="a" style="left:1581px;top:1013px;width:1px;height:13px;background:#6382bf"></div>
<div class="a" style="left:1652px;top:1013px;width:1px;height:13px;background:#6382bf"></div>
</body></html>
